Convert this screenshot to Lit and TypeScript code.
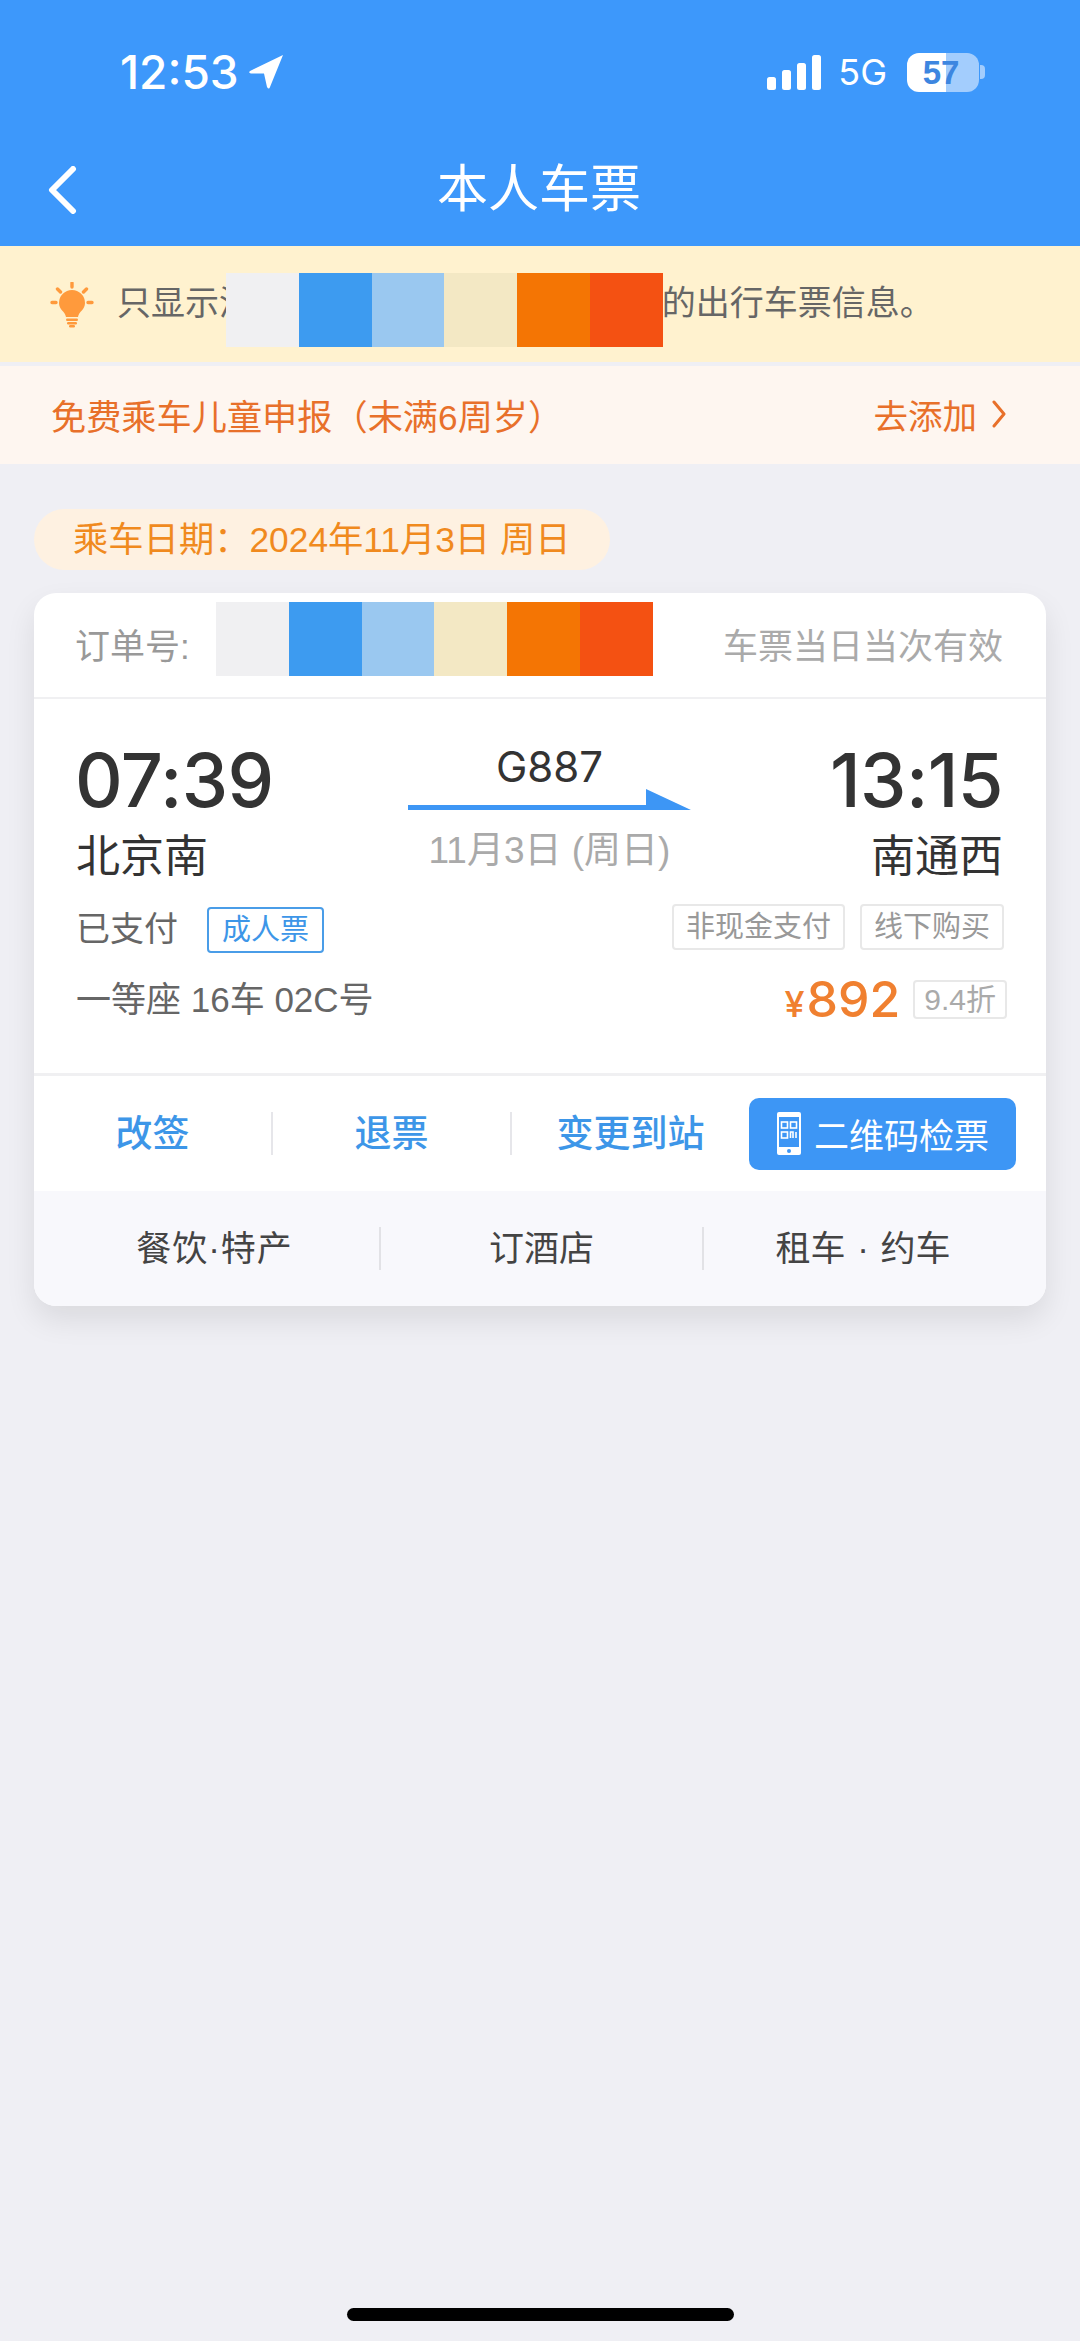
import { LitElement, html, css } from 'lit';
import { customElement } from 'lit/decorators.js';

const SWATCHES = ['#f0f0f2', '#3d9bf0', '#9ac8f0', '#f3e8c4', '#f47504', '#f45112'];

@customElement('app-root')
export class AppRoot extends LitElement {
  static styles = css`
    :host {
      display: block;
      font-family: 'Liberation Sans', 'Noto Sans CJK SC', sans-serif;
    }
    .page {
      min-height: 2341px;
      background: #efeff4;
      display: flex;
      flex-direction: column;
      box-sizing: border-box;
    }
    svg { display: block; flex: none; }

    /* header */
    .head { height: 246px; background: #3d98fb; color: #fff; }
    .status { height: 144px; display: flex; align-items: center; padding: 0 95px 0 120px; }
    .clock { font-family: Inter, sans-serif; font-size: 46px; line-height: 50px; font-weight: 500; }
    .loc { margin-left: 10px; }
    .right { margin-left: auto; display: flex; align-items: center; }
    .net { font-size: 36px; margin-left: 16px; margin-right: 20px; font-family: Inter, sans-serif; }
    .battery {
      width: 72px; height: 39px; border-radius: 12px; position: relative; overflow: hidden;
      background: linear-gradient(90deg, #fff 0 39px, #a3cdfd 39px);
    }
    .battery span {
      position: absolute; inset: 0; text-align: center; line-height: 39px;
      font-size: 33px; font-weight: 700; color: #3d86e0; padding-right: 4px;
    }
    .nub { width: 5px; height: 14px; background: #a3cdfd; border-radius: 0 4px 4px 0; margin-left: 1px; }
    .nav { height: 92px; display: flex; align-items: center; position: relative; }
    .back { margin-left: 46px; }
    .title {
      position: absolute; left: 0; right: 2px; text-align: center;
      font-size: 51px; line-height: 60px;
    }

    /* notices */
    .notice {
      height: 116px; background: #fff2cf; display: flex; align-items: flex-start;
      padding-left: 50px; box-sizing: border-box; color: #666; font-size: 34px;
    }
    .notice svg { margin-top: 36px; }
    .notice .msg { line-height: 52px; margin-top: 31px; }
    .notice .first { margin-left: 23px; }
    /* the swatches cover the rest of the masked name */
    .notice .swatches { margin: 27px 0 0 -27px; position: relative; }
    .notice .rest { margin-left: -1px; }
    .swatches { display: flex; flex: none; }
    .swatches div { width: 72.8px; height: 74px; }
    .kids {
      height: 98px; margin-top: 4px; background: #fef6f0; color: #e8702a; font-size: 35.2px;
      display: flex; align-items: center; justify-content: space-between; padding: 0 74px 2px 51px;
      box-sizing: border-box;
    }
    .add { display: flex; align-items: center; gap: 15px; font-size: 34.5px; }

    /* date pill */
    .pill {
      width: 576px; height: 61px; margin: 45px 0 0 34px; border-radius: 31px;
      background: #fef1e1; color: #f08a1e; font-size: 35.3px; line-height: 61px;
      padding-left: 39px; box-sizing: border-box;
    }

    /* ticket card */
    .card {
      margin: 23px 34px 0; border-radius: 22px; background: #fff; overflow: hidden;
      box-shadow: 0 14px 30px rgba(0, 0, 0, 0.09);
    }
    .order {
      height: 104px; display: flex; align-items: center; padding: 0 43px 3px 42px;
      border-bottom: 2px solid #f0f0f2; font-size: 35px; color: #aaa; box-sizing: content-box;
    }
    .order { height: 101px; }
    .order .label { width: 140px; color: #999; margin-left: -1px; margin-right: 1px; white-space: nowrap; }
    .order .swatches { align-self: flex-start; margin-top: 9px; }
    .order .valid { margin-left: auto; }
    .main { height: 377px; padding: 43px 42px 0; box-sizing: border-box; border-bottom: 3px solid #f0f0f2; }
    .route { display: grid; grid-template-columns: 332px 283px 1fr; color: #333; }
    .time { font-family: Inter, sans-serif; font-size: 74px; line-height: 76px; font-weight: 500; letter-spacing: -0.6px; margin-left: -1px; }
    .station { font-size: 44px; line-height: 50px; margin-top: 14px; }
    .end { text-align: right; padding-right: 1px; }
    .mid { text-align: center; }
    .train { font-family: Inter, sans-serif; font-size: 42px; line-height: 44px; margin-top: 3px; }
    .date { font-size: 37px; line-height: 44px; color: #aaa; margin-top: 18px; }
    .row { display: flex; align-items: flex-start; color: #666; font-size: 34px; }
    .row3 { margin-top: 22px; height: 49px; }
    .row3 .paid { line-height: 46px; margin-top: 2px; }
    .tag {
      font-size: 29px; line-height: 42px; height: 42px; padding: 0 12px; color: #999;
      border: 2px solid #e8e8e8; border-radius: 4px; white-space: nowrap;
    }
    .tag.blue { color: #3d96e8; border-color: #4a9de8; margin: 3px 0 0 29px; padding: 0 13px; }
    .tags { margin: 0 0 0 auto; display: flex; gap: 15px; }
    .row4 { margin-top: 27px; height: 39px; line-height: 39px; font-size: 35px; }
    .price { margin-left: auto; color: #f08030; display: flex; align-items: baseline; font-family: Inter, sans-serif; font-weight: 500; }
    .price .yen { font-size: 36px; margin-right: 2px; }
    .price .num { font-size: 50px; }
    .tag.off { margin: 0 -3px 0 13px; height: 35px; line-height: 35px; padding: 0 9px; color: #aaa; font-size: 30px; }

    .actions { height: 115px; display: flex; align-items: center; }
    .act { width: 239px; text-align: center; font-size: 37px; font-weight: 500; color: #3d96e8; margin: -5px 0 0 -1px; padding-right: 1px; }
    .sep { width: 2px; height: 43px; background: #e6e6ea; flex: none; margin-left: -2px; }
    .qr {
      width: 267px; height: 72px; margin-left: -2px; background: #3d96f5; color: #fff; border-radius: 10px;
      display: flex; align-items: center; padding-left: 28px; box-sizing: border-box; font-size: 35px; gap: 13px;
    }
    .more { height: 115px; background: #f8f8fc; display: grid; grid-template-columns: 345px 323px 1fr; align-items: center; }
    .more div { text-align: center; font-size: 35px; line-height: 43px; color: #444; }
    .more div:first-child { padding-left: 16px; letter-spacing: 1px; }
    .more div:last-child { padding-right: 24px; word-spacing: 2px; }
    .more div + div { border-left: 2px solid #e2e2e6; }

    .home { width: 387px; height: 13px; border-radius: 7px; background: #000; margin: auto auto 20px; }
  `;

  swatches() {
    return html`<div class="swatches">${SWATCHES.map(c => html`<div style="background:${c}"></div>`)}</div>`;
  }

  render() {
    return html`
      <div class="page">
        <div class="head">
          <div class="status">
            <span class="clock">12:53</span>
            <svg class="loc" width="35" height="34" viewBox="0 0 35 34"><path d="M34 0 L1 16 Q-1 18 2 18.5 L15 18.5 L18 32 Q20 35 21 32 Z" fill="#fff"/></svg>
            <div class="right">
              <svg width="55" height="35" viewBox="0 0 55 35" fill="#fff">
                <rect x="0" y="22" width="9" height="13" rx="2.5"/>
                <rect x="15" y="15" width="9" height="20" rx="2.5"/>
                <rect x="30" y="8" width="9" height="27" rx="2.5"/>
                <rect x="45" y="0" width="9" height="35" rx="2.5"/>
              </svg>
              <span class="net">5G</span>
              <div class="battery"><span>57</span></div>
              <div class="nub"></div>
            </div>
          </div>
          <div class="nav">
            <svg class="back" width="32" height="48" viewBox="0 0 32 48"><path d="M27 3 L6 24 L27 45" fill="none" stroke="#fff" stroke-width="6" stroke-linecap="round" stroke-linejoin="round"/></svg>
            <div class="title">本人车票</div>
          </div>
        </div>

        <div class="notice">
          <svg width="44" height="46" viewBox="0 0 44 46" fill="#ff9a3c">
            <path d="M22 8 A13 13 0 0 1 35 21 C35 28 29 29 28 35 H16 C15 29 9 28 9 21 A13 13 0 0 1 22 8 Z"/>
            <path d="M22 1 V5 M2 20.5 H6 M38 20.5 H42 M7.5 7 L10.5 10 M36.5 7 L33.5 10" stroke="#ff9a3c" stroke-width="3.4" stroke-linecap="round"/>
            <rect x="16" y="36.5" width="12" height="2.4" rx="1.2"/>
            <rect x="17" y="40" width="10" height="2.4" rx="1.2"/>
            <rect x="19" y="43" width="6" height="2.4" rx="1.2"/>
          </svg>
          <span class="msg first">只显示涉</span>
          ${this.swatches()}
          <span class="msg rest">的出行车票信息。</span>
        </div>
        <div class="kids">
          <span>免费乘车儿童申报（未满6周岁）</span>
          <span class="add">去添加
            <svg width="14" height="28" viewBox="0 0 14 28"><path d="M2 2 L12 14 L2 26" fill="none" stroke="#e8702a" stroke-width="3" stroke-linecap="round" stroke-linejoin="round"/></svg>
          </span>
        </div>

        <div class="pill">乘车日期：2024年11月3日 周日</div>

        <div class="card">
          <div class="order">
            <span class="label">订单号:</span>
            ${this.swatches()}
            <span class="valid">车票当日当次有效</span>
          </div>
          <div class="main">
            <div class="route">
              <div>
                <div class="time">07:39</div>
                <div class="station">北京南</div>
              </div>
              <div class="mid">
                <div class="train">G887</div>
                <svg width="283" height="22" viewBox="0 0 283 22"><path d="M0 16 H238 V0 L283 21 H0 Z" fill="#3d96f5"/></svg>
                <div class="date">11月3日 (周日)</div>
              </div>
              <div class="end">
                <div class="time">13:15</div>
                <div class="station">南通西</div>
              </div>
            </div>
            <div class="row row3">
              <span class="paid">已支付</span>
              <span class="tag blue">成人票</span>
              <div class="tags">
                <span class="tag">非现金支付</span>
                <span class="tag">线下购买</span>
              </div>
            </div>
            <div class="row row4">
              <span>一等座 16车 02C号</span>
              <div class="price"><span class="yen">¥</span><span class="num">892</span></div>
              <span class="tag off">9.4折</span>
            </div>
          </div>
          <div class="actions">
            <div class="act">改签</div><div class="sep"></div>
            <div class="act">退票</div><div class="sep"></div>
            <div class="act">变更到站</div>
            <div class="qr">
              <svg width="24" height="43" viewBox="0 0 24 43">
                <path fill-rule="evenodd" fill="#fff" d="M2 0 H22 Q24 0 24 2 V41 Q24 43 22 43 H2 Q0 43 0 41 V2 Q0 0 2 0 Z M2 5 V35 H22 V5 Z"/>
                <circle cx="12" cy="39" r="2" fill="#3d96f5"/>
                <g fill="none" stroke="#fff" stroke-width="1.6">
                  <rect x="4.5" y="10" width="6" height="6"/>
                  <rect x="13.5" y="10" width="6" height="6"/>
                  <rect x="4.5" y="20" width="6" height="6"/>
                  <path d="M13.5 26 V20 H16 V26 M19 20 V26"/>
                </g>
              </svg>
              <span>二维码检票</span>
            </div>
          </div>
          <div class="more">
            <div>餐饮·特产</div>
            <div>订酒店</div>
            <div>租车 · 约车</div>
          </div>
        </div>

        <div class="home"></div>
      </div>
    `;
  }
}
